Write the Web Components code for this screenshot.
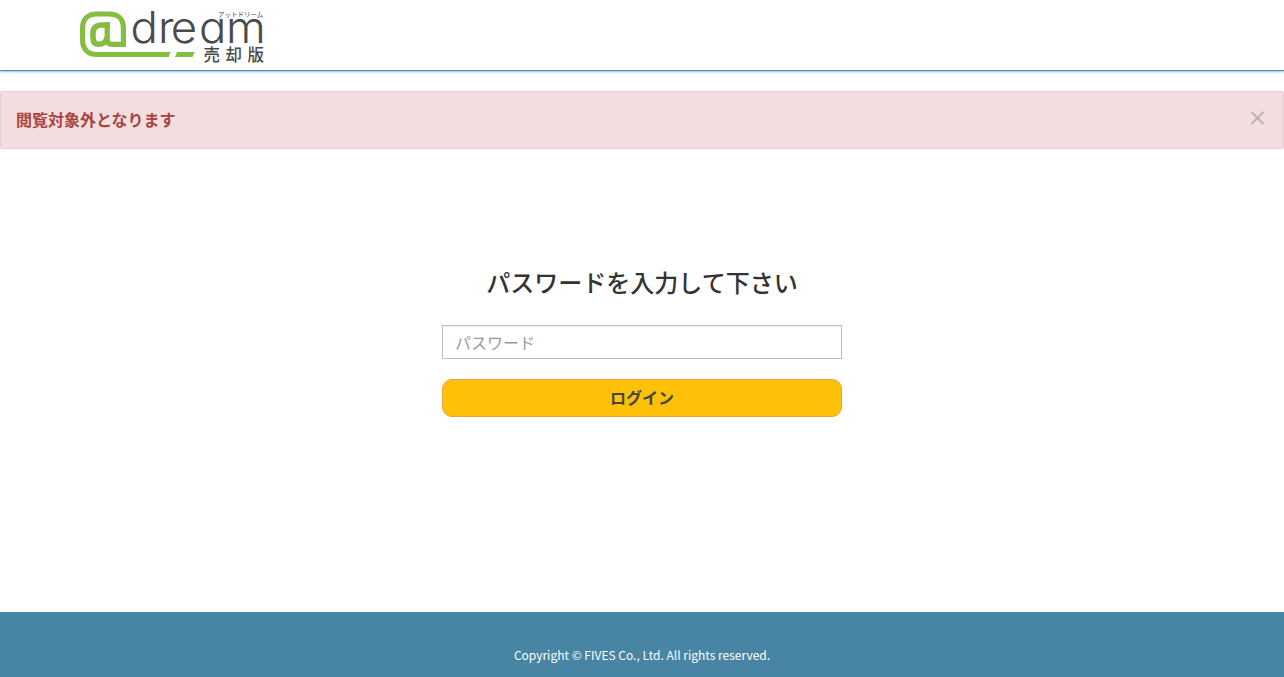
<!DOCTYPE html>
<html lang="ja">
<head>
<meta charset="utf-8">
<title>@dream 売却版</title>
<style>
  body {
    margin: 0;
    background: #fff;
    color: #333;
    font: 16px/1.42857 "Noto Sans CJK JP", sans-serif;
  }
</style>
</head>
<body>
<login-page></login-page>

<script>
class DreamLogo extends HTMLElement {
  constructor() {
    super();

    const style = `
      :host {
        display: block;
        width: 184px;
        height: 54px;
      }

      svg {
        display: block;
        overflow: visible;
      }

      .word {
        font: 300 43px Inter, sans-serif;
        font-feature-settings: "cv11";
      }

      .ja {
        font-family: "Noto Sans CJK JP", sans-serif;
      }
    `;

    const html = `
    <svg width="184" height="54" viewBox="80 10 184 54">
      <g fill="none" stroke="#84bd3f" stroke-width="5.200">
        <path d="M169 54.500H97C88 54.500 82.600 49 82.600 40V28C82.600 19 88 14 97 14H109C118 14 123.400 19 123.400 28V44.400H112C109 44.400 107.200 43 107.200 40V22"/>
        <path stroke-width="5.600" d="M109.800 25H102C96 25 93 28 93 33V37.500C93 42 95 44.300 98.500 44.300C103 44.300 106.500 42 107 37"/>
      </g>
      <path fill="#84bd3f" d="M168 52H170.500L168.500 57H166zM177 52H194.500L192.500 57H175z"/>
      <text class="word" transform="translate(130 42.500) scale(1.060 1)" x="0.500 26.500 38.500 65 90.500" y="0" fill="#4a4a4c">dream</text>
      <text class="ja" x="218" y="17" font-size="6.500" fill="#4a4a4c">アットドリーム</text>
      <text class="ja" x="203.500" y="60.500" font-size="16.500" font-weight="500" fill="#4a4a4c" textLength="60.500">売却版</text>
    </svg>
    `;

    this.attachShadow({ mode: "open" });
    this.shadowRoot.innerHTML = `<style>${style}</style>${html}`;
  }
}

class SiteHeader extends HTMLElement {
  constructor() {
    super();

    const style = `
      :host {
        display: block;
        box-sizing: border-box;
        height: 71px;
        padding: 10px 80px 0;
        border-bottom: 1px solid #4a8ab8;
        box-shadow: 0 1px 2px #8cc4e8;
      }
    `;

    this.attachShadow({ mode: "open" });
    this.shadowRoot.innerHTML = `<style>${style}</style><slot></slot>`;
  }
}

class AlertBox extends HTMLElement {
  constructor() {
    super();

    const style = `
      :host {
        display: flex;
        box-sizing: border-box;
        justify-content: space-between;
        align-items: center;
        height: 58px;
        margin-top: 20px;
        padding: 0 18px 2px 15px;
        border: 1px solid #ebccd1;
        border-radius: 2px;
        background: #f2dede;
        color: #a94442;
        font-weight: 700;
      }

      button {
        display: block;
        padding: 0;
        margin-top: -2px;
        border: 0;
        background: none;
        color: #c2b2b2;
        line-height: 0;
      }
    `;

    const html = `
    <span><slot></slot></span>
    <button type="button" aria-label="Close">
      <svg width="14" height="14" viewBox="0 0 14 14" fill="none" stroke="currentColor" stroke-width="2.200">
        <path d="M0.500 1L12.500 13M12.500 1L0.500 13"/>
      </svg>
    </button>
    `;

    this.attachShadow({ mode: "open" });
    this.shadowRoot.innerHTML = `<style>${style}</style>${html}`;

    this.close = this.close.bind(this);
    this.buttonClose = this.shadowRoot.querySelector("button");
  }

  close() {
    this.remove();
  }

  connectedCallback() {
    this.buttonClose.addEventListener("click", this.close);
  }

  disconnectedCallback() {
    this.buttonClose.removeEventListener("click", this.close);
  }
}

class PasswordForm extends HTMLElement {
  constructor() {
    super();

    const style = `
      :host {
        display: block;
        width: 400px;
        margin: 0 auto;
      }

      h1 {
        margin: 0 0 25px;
        font-size: 24px;
        font-weight: 500;
        line-height: 36px;
        text-align: center;
        white-space: nowrap;
      }

      input,
      button {
        display: block;
        box-sizing: border-box;
        width: 100%;
        font-family: inherit;
        font-size: 16px;
      }

      input {
        height: 34px;
        margin: 0 0 20px;
        padding: 6px 12px;
        border: 1px solid #bfbfbf;
        border-radius: 0;
        box-shadow: inset 0 1px 1px rgba(0, 0, 0, 0.075);
        color: #555;
      }

      input::placeholder {
        color: #999;
      }

      button {
        height: 38px;
        padding: 0 0 2px;
        border: 1px solid #eea236;
        border-radius: 10px;
        background: #ffc107;
        color: #444;
        font-weight: 700;
        line-height: 24px;
      }
    `;

    const html = `
    <h1><slot></slot></h1>
    <form>
      <input type="password" placeholder="パスワード">
      <button type="button">ログイン</button>
    </form>
    `;

    this.attachShadow({ mode: "open" });
    this.shadowRoot.innerHTML = `<style>${style}</style>${html}`;
  }
}

class SiteFooter extends HTMLElement {
  constructor() {
    super();

    const style = `
      :host {
        display: block;
        box-sizing: border-box;
        height: 65px;
        padding-top: 34px;
        background: #4884a4;
        color: #fff;
        font-size: 12px;
        line-height: 17px;
        text-align: center;
      }
    `;

    this.attachShadow({ mode: "open" });
    this.shadowRoot.innerHTML = `<style>${style}</style><slot></slot>`;
  }
}

class LoginPage extends HTMLElement {
  constructor() {
    super();

    const style = `
      :host {
        display: flex;
        flex-direction: column;
        height: 677px;
      }

      main {
        flex: 1;
        padding-top: 115px;
      }
    `;

    const html = `
    <site-header><dream-logo></dream-logo></site-header>
    <alert-box>閲覧対象外となります</alert-box>
    <main>
      <password-form>パスワードを入力して下さい</password-form>
    </main>
    <site-footer>Copyright © FIVES Co., Ltd. All rights reserved.</site-footer>
    `;

    this.attachShadow({ mode: "open" });
    this.shadowRoot.innerHTML = `<style>${style}</style>${html}`;
  }
}

customElements.define("dream-logo", DreamLogo);
customElements.define("site-header", SiteHeader);
customElements.define("alert-box", AlertBox);
customElements.define("password-form", PasswordForm);
customElements.define("site-footer", SiteFooter);
customElements.define("login-page", LoginPage);
</script>
</body>
</html>
